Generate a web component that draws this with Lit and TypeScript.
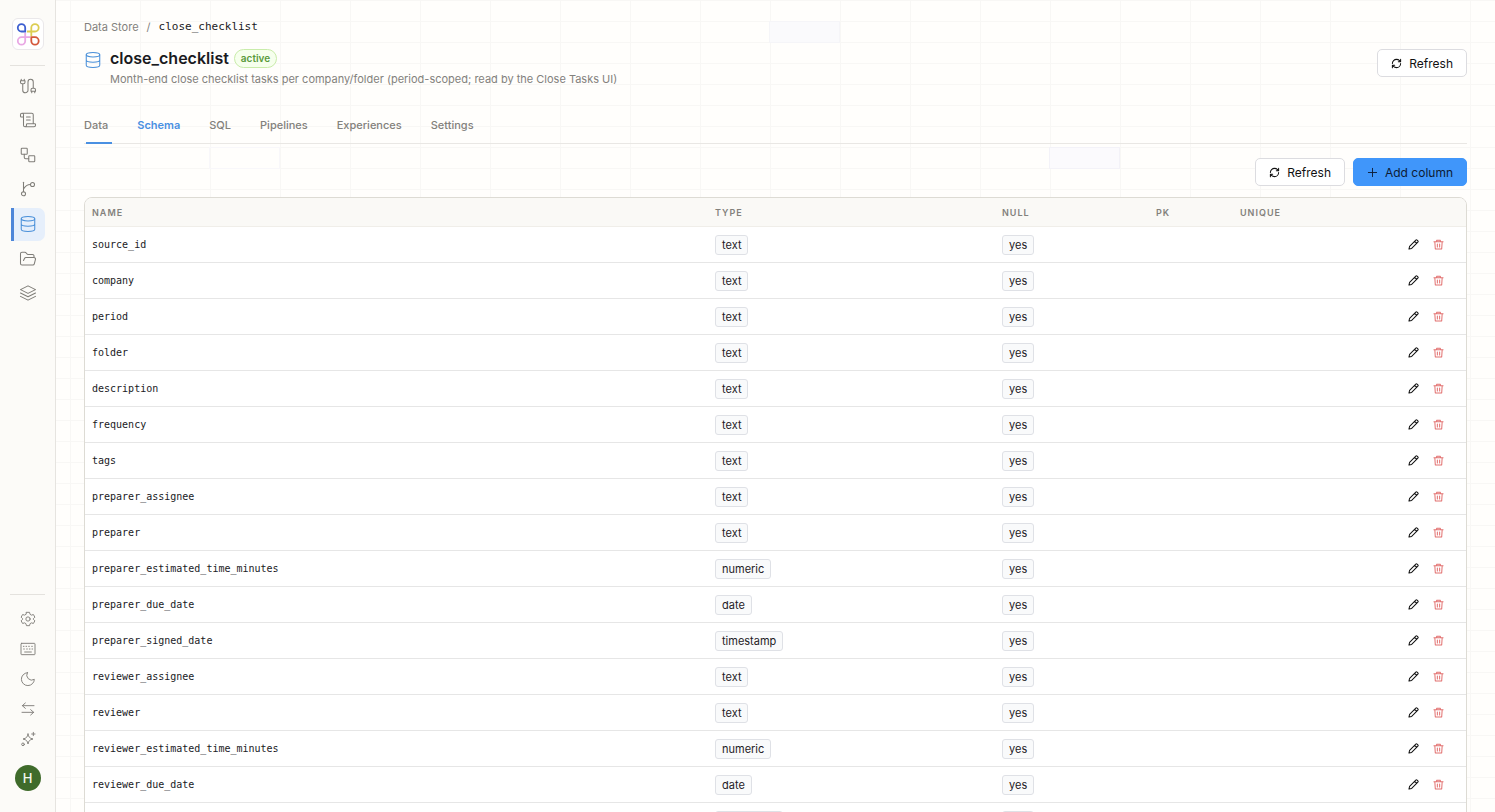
import { LitElement, html, css, svg } from "lit";
import { customElement } from "lit/decorators.js";

const ICONS = {
  cable: svg`<path d="M4 9a2 2 0 0 1-2-2V5h6v2a2 2 0 0 1-2 2ZM3 5V3M7 5V3M19 15V6.500a3.500 3.500 0 0 0-7 0v11a3.500 3.500 0 0 1-7 0V9M17 21v-2M21 21v-2M22 19h-6v-2a2 2 0 0 1 2-2h2a2 2 0 0 1 2 2Z"/>`,
  scroll: svg`<path d="M15 12h-5M15 8h-5M19 17V5a2 2 0 0 0-2-2H4M8 21h12a2 2 0 0 0 2-2v-1a1 1 0 0 0-1-1H11a1 1 0 0 0-1 1v1a2 2 0 1 1-4 0V5a2 2 0 1 0-4 0v2a1 1 0 0 0 1 1h3"/>`,
  workflow: svg`<rect x="3" y="3" width="8" height="8" rx="1"/><path d="M7 11v4a2 2 0 0 0 2 2h4"/><rect x="13" y="13" width="8" height="8" rx="1"/>`,
  branch: svg`<path d="M6 3v12.500"/><circle cx="18" cy="6" r="2.700"/><circle cx="6" cy="18.300" r="2.700"/><path d="M15.300 6C10 6 8 8.500 6 12"/>`,
  database: svg`<ellipse cx="12" cy="5" rx="9" ry="3"/><path d="M3 5v14a9 3 0 0 0 18 0V5M3 12a9 3 0 0 0 18 0"/>`,
  folder: svg`<path d="m6 14 1.500-2.900A2 2 0 0 1 9.240 10H20a2 2 0 0 1 1.940 2.500l-1.540 6a2 2 0 0 1-1.950 1.500H4a2 2 0 0 1-2-2V5a2 2 0 0 1 2-2h3.900a2 2 0 0 1 1.690.9l.81 1.200a2 2 0 0 0 1.670.9H18a2 2 0 0 1 2 2v2"/>`,
  layers: svg`<path d="M12 2.500 22 7.500 12 12.500 2 7.500ZM2 12l10 5 10-5M2 16.500l10 5 10-5"/>`,
  gear: svg`<path d="M9.700 2h4.600l.8 3 2 1.200 3-.9 2.200 4-2.200 2.100v1.200l2.200 2.100-2.200 4-3-.9-2 1.200-.8 3H9.700l-.8-3-2-1.200-3 .9-2.200-4 2.200-2.100v-1.200L1.700 9.300l2.200-4 3 .9 2-1.200Z"/><circle cx="12" cy="12" r="3.200"/>`,
  keyboard: svg`<rect x="1.500" y="3.500" width="21" height="17" rx="1"/><path d="M5 8h1M9 8h1M13 8h1M17.500 8h1M5.500 12h1M10 12h1M14 12h1M18 12h1M7 16.500h10"/>`,
  moon: svg`<path d="M11 2.500a7.500 7.500 0 0 0 10.500 10 9.700 9.700 0 1 1-10.500-10Z"/>`,
  swap: svg`<path d="M21 7H3.500M8 3 3.500 7 8 11M3 17h17.500M16 13l4.500 4-4.500 4"/>`,
  sparkles: svg`<path d="M12 4.500c.9 4.800 2.300 6.300 7.500 7.500-5.200 1.200-6.600 2.700-7.500 7.500-.9-4.800-2.300-6.300-7.500-7.500 5.200-1.200 6.600-2.700 7.500-7.500ZM20 2v5M17.500 4.500h5"/><circle cx="4.500" cy="20" r="2"/>`,
  refresh: svg`<path d="M3 12a9 9 0 0 1 9-9 9.750 9.750 0 0 1 6.740 2.740L21 8M21 3v5h-5M21 12a9 9 0 0 1-9 9 9.750 9.750 0 0 1-6.740-2.740L3 16M8 16H3v5"/>`,
  plus: svg`<path d="M3 12h18M12 3v18"/>`,
  pencil: svg`<path d="M2 22l1.500-6L17 2.500a2 2 0 0 1 2.800 0l1.700 1.700a2 2 0 0 1 0 2.800L8 20.500ZM14.500 5l4.500 4.500"/>`,
  trash: svg`<path d="M2 6h20M8 6V2.500h8V6M4 6l1 16h14l1-16M9.500 11v6.500M14.500 11v6.500"/>`,
};

type IconName = keyof typeof ICONS;

@customElement("line-icon")
class LineIcon extends LitElement {
  static properties = { name: {}, weight: { type: Number } };
  declare name: IconName;
  declare weight: number;
  static styles = css`
    :host { display: block; flex: none; }
    svg {
      display: block; width: 100%; height: 100%; fill: none; stroke: currentColor;
      stroke-linecap: round; stroke-linejoin: round;
    }
  `;
  render() {
    return html`<svg viewBox="0 0 24 24" stroke-width=${this.weight ?? 1.5} aria-hidden="true">${ICONS[this.name]}</svg>`;
  }
}

@customElement("side-rail")
class SideRail extends LitElement {
  static styles = css`
    :host {
      display: flex; flex-direction: column; align-items: center; flex: none;
      box-sizing: border-box; width: 56px; padding: 18px 0 21px;
      background: #fcfbf8; border-right: 1px solid #e6e4e0; color: #7f7d78;
    }
    .logo {
      display: block; width: 30px; height: 30px; border: 1px solid #eae8ea;
      border-radius: 6px; background: #fff; margin-bottom: 15px;
    }
    .logo svg { display: block; width: 30px; height: 30px; }
    .rule { width: 35px; height: 1px; background: #e4e2de; border: 0; margin: 0; flex: none; }
    nav {
      display: flex; flex-direction: column; align-items: center; justify-content: space-between;
      height: 241px; margin-top: 3px;
    }
    .item {
      display: flex; align-items: center; justify-content: center; box-sizing: border-box;
      width: 34px; height: 33px; color: inherit; border-left: 3px solid transparent;
      border-right: 3px solid transparent; border-radius: 0 7px 7px 0;
    }
    .item.on { background: #e6effb; border-left-color: #4d86d9; border-right-color: #e6effb; color: #4a90d9; }
    .item line-icon { width: 18px; height: 18px; }
    .tools { display: flex; flex-direction: column; align-items: center; padding: 9px 0 11px; }
    .spacer { flex: 1; }
    button {
      font: inherit; color: inherit; border: 0; padding: 0; background: none;
      display: flex; align-items: center; justify-content: center; width: 34px; height: 30px;
    }
    button line-icon { width: 16px; height: 16px; }
    .avatar {
      width: 26px; height: 26px; border-radius: 50%; background: #3f6b2b; color: #f4f8f0;
      font-size: 13px; font-weight: 500;
    }
  `;
  render() {
    const items: [IconName, string][] = [
      ["cable", "Connections"], ["scroll", "Scripts"], ["workflow", "Workflows"], ["branch", "Branches"],
      ["database", "Data Store"], ["folder", "Files"], ["layers", "Layers"],
    ];
    const tools: [IconName, string][] = [
      ["gear", "Settings"], ["keyboard", "Shortcuts"], ["moon", "Theme"], ["swap", "Switch"], ["sparkles", "Assistant"],
    ];
    return html`
      <a class="logo" href="#home" aria-label="Home">
        <svg viewBox="0 0 30 30" fill="none" stroke-width="1.800">
          <path stroke="#dccd52" d="M14 12.500h8a3.700 3.700 0 1 0-3.700-3.700V17"/>
          <path stroke="#e9a8e4" d="M17 18.200H8.500a3.700 3.700 0 1 0 3.700 3.700V14"/>
          <path stroke="#3d5fd0" d="M12.200 12.500V8.800a3.700 3.700 0 1 0-3.700 3.700Z"/>
          <path stroke="#d4573a" d="M18.300 18.200v3.700a3.700 3.700 0 1 0 3.700-3.700Z"/>
        </svg>
      </a>
      <hr class="rule" />
      <nav>${items.map(([icon, label]) => html`
        <a class="item ${icon === "database" ? "on" : ""}" href="#${icon}" aria-label=${label}>
          <line-icon name=${icon} .weight=${1.4}></line-icon>
        </a>`)}
      </nav>
      <div class="spacer"></div>
      <hr class="rule" />
      <div class="tools">${tools.map(([icon, label]) => html`
        <button aria-label=${label}><line-icon name=${icon} .weight=${1.4}></line-icon></button>`)}
      </div>
      <button class="avatar" aria-label="Account">H</button>
    `;
  }
}

const COLUMNS: [string, string][] = [
  ["source_id", "text"], ["company", "text"], ["period", "text"], ["folder", "text"],
  ["description", "text"], ["frequency", "text"], ["tags", "text"], ["preparer_assignee", "text"],
  ["preparer", "text"], ["preparer_estimated_time_minutes", "numeric"], ["preparer_due_date", "date"],
  ["preparer_signed_date", "timestamp"], ["reviewer_assignee", "text"], ["reviewer", "text"],
  ["reviewer_estimated_time_minutes", "numeric"], ["reviewer_due_date", "date"],
  ["reviewer_signed_date", "timestamp"],
];

@customElement("schema-table")
class SchemaTable extends LitElement {
  static styles = css`
    :host {
      display: block; border: 1px solid #dddbd4; border-radius: 8px; overflow: hidden; background: #fff;
    }
    table { width: 100%; table-layout: fixed; border-collapse: separate; border-spacing: 0; }
    .type { width: 287px; } .null { width: 154px; } .pk { width: 84px; } .unique { width: 163px; } .acts { width: 70px; }
    th, td { box-sizing: border-box; text-align: left; padding: 0 7px; }
    th {
      height: 29px; background: #faf9f6; color: #83817c; font-size: 9px; font-weight: 600;
      letter-spacing: 1px; border-bottom: 1px solid #f0eee9;
    }
    td { height: 36px; border-bottom: 1px solid #e6e6e6; }
    .name { font-family: "DejaVu Sans Mono", monospace; font-size: 10px; color: #1a1a1e; }
    .tag {
      display: inline-block; box-sizing: border-box; height: 20px; line-height: 18px; padding: 0 6px;
      font-size: 11px; color: #1f2126; background: #f9fafb; border: 1px solid #dfe1e6; border-radius: 3px;
      vertical-align: middle;
    }
    .actions { display: flex; gap: 10px; padding-left: 3px; }
    button { border: 0; background: none; padding: 2px; color: #111; }
    button.danger { color: #e2706f; }
    line-icon { width: 11px; height: 11px; }
  `;
  render() {
    return html`
      <table>
        <colgroup><col /><col class="type" /><col class="null" /><col class="pk" /><col class="unique" /><col class="acts" /></colgroup>
        <thead><tr><th>NAME</th><th>TYPE</th><th>NULL</th><th>PK</th><th>UNIQUE</th><th></th></tr></thead>
        <tbody>${COLUMNS.map(([name, type]) => html`
          <tr>
            <td class="name">${name}</td>
            <td><span class="tag">${type}</span></td>
            <td><span class="tag">yes</span></td>
            <td></td><td></td>
            <td><div class="actions">
              <button aria-label="Edit ${name}"><line-icon name="pencil" .weight=${2.2}></line-icon></button>
              <button class="danger" aria-label="Delete ${name}"><line-icon name="trash" .weight=${2.2}></line-icon></button>
            </div></td>
          </tr>`)}
        </tbody>
      </table>`;
  }
}

@customElement("app-root")
class AppRoot extends LitElement {
  static styles = css`
    :host {
      display: flex; height: 100vh; overflow: hidden; color: #1a1a1e;
      font-family: Inter, "Liberation Sans", sans-serif; font-size: 12px;
      background-color: #fffefc;
    }
    main {
      position: relative; flex: 1; min-width: 0; overflow-y: auto; scrollbar-width: none; padding: 18px 28px;
      box-sizing: border-box;
      background-image:
        linear-gradient(to right, #f8f7f5 1px, transparent 1px),
        linear-gradient(to bottom, #f8f7f5 1px, transparent 1px);
      background-size: 70px 21px;
      background-position: 14px 0;
    }
    .cell { position: absolute; width: 71px; height: 22px; box-sizing: border-box; border: 1px solid #f3f2f8; background: #fbfafd; }
    .cell.a { left: 713px; top: 21px; border-color: #f5f5f8; background: #fafafc; }
    .cell.b { left: 993px; top: 147px; }
    .cell.c { left: 153px; top: 147px; border-color: #f8f7fa; background: none; }
    .crumbs { display: flex; gap: 8px; font-size: 11px; line-height: 18px; color: #83817c; }
    .crumbs a { color: inherit; text-decoration: none; }
    .crumbs .here { font-family: "DejaVu Sans Mono", monospace; color: #1a1a1e; }
    header { position: relative; display: flex; justify-content: space-between; align-items: flex-start; padding-top: 11px; }
    header .btn { margin-top: 2px; }
    .heading { display: grid; grid-template-columns: 18px auto; column-gap: 8px; }
    .heading > line-icon { width: 18px; height: 18px; color: #4a90d9; margin-top: 4px; }
    .title { display: flex; align-items: center; gap: 5px; padding-bottom: 1px; }
    h1 { margin: 0; font-size: 16px; line-height: 22px; font-weight: 600; color: #1a1a1e; }
    .status {
      box-sizing: border-box; height: 19px; line-height: 17px; padding: 0 6px; border-radius: 10px;
      font-size: 10px; font-weight: 600; color: #5a9a3c; background: #f6ffed; border: 1px solid #c9ecaa;
    }
    .desc { grid-column: 2; margin: 0; font-size: 11px; line-height: 18px; color: #83817c; }
    .btn {
      display: flex; align-items: center; gap: 7px; box-sizing: border-box; height: 28px; padding: 0 13px;
      font: inherit; color: #111; background: #fff; border: 1px solid #dcdce0; border-radius: 5px;
    }
    .btn.primary { background: #4096fa; border-color: #4096fa; color: #0d1b33; }
    .btn line-icon { width: 11px; height: 11px; }
    .tabs {
      position: relative; display: flex; gap: 29px; margin-top: 23px; height: 32px;
      border-bottom: 1px solid #e9e7e4; font-size: 11px;
    }
    .tabs a { color: #83817c; text-decoration: none; font-weight: 500; line-height: 28px; }
    .tabs a.on { color: #4a90e2; font-weight: 600; }
    .ink { position: absolute; left: 2px; bottom: -1px; width: 26px; height: 2px; background: #4a90e2; }
    .bar { position: relative; display: flex; justify-content: flex-end; gap: 8px; padding: 14px 0 11px; }
    schema-table { position: relative; }
  `;
  render() {
    const tabs = ["Data", "Schema", "SQL", "Pipelines", "Experiences", "Settings"];
    return html`
      <side-rail></side-rail>
      <main>
        <span class="cell a"></span><span class="cell b"></span><span class="cell c"></span>
        <div class="crumbs"><a href="#store">Data Store</a><span>/</span><span class="here">close_checklist</span></div>
        <header>
          <div class="heading">
            <line-icon name="database" .weight=${1.4}></line-icon>
            <div class="title"><h1>close_checklist</h1><span class="status">active</span></div>
            <p class="desc">Month-end close checklist tasks per company/folder (period-scoped; read by the Close Tasks UI)</p>
          </div>
          <button class="btn"><line-icon name="refresh" .weight=${2.2}></line-icon>Refresh</button>
        </header>
        <nav class="tabs">
          ${tabs.map((t) => html`<a class=${t === "Schema" ? "on" : ""} href="#${t}">${t}</a>`)}
          <span class="ink"></span>
        </nav>
        <div class="bar">
          <button class="btn"><line-icon name="refresh" .weight=${2.2}></line-icon>Refresh</button>
          <button class="btn primary"><line-icon name="plus" .weight=${2}></line-icon>Add column</button>
        </div>
        <schema-table></schema-table>
      </main>
    `;
  }
}
